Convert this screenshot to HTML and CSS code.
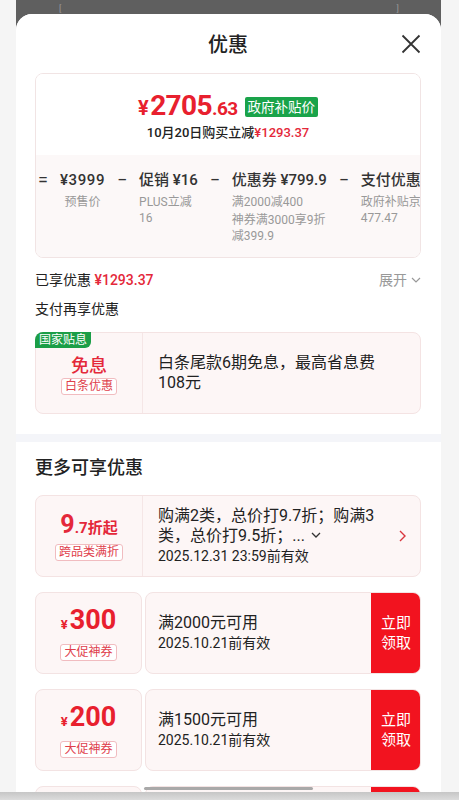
FILE: index.html
```html
<!DOCTYPE html>
<html>
<head>
    <meta charset="utf-8">
    <title>优惠</title>
    <link rel="stylesheet" href="styles.css">
</head>
<body>
    <div class="screen">
        <div class="stage">
            <div class="column">
                <div class="backdrop">
                    <span class="mark">[</span>
                    <span class="mark">]</span>
                </div>
                <div class="sheet">
                    <section class="panel panel-top">
                        <div class="sheet-head">
                            <span></span>
                            <h1>优惠</h1>
                            <span class="close">
                                <svg width="20" height="20" viewBox="0 0 20 20"><path d="M1.5 1.5 L18.5 18.5 M18.5 1.5 L1.5 18.5" stroke="#333" stroke-width="1.8" fill="none"/></svg>
                            </span>
                        </div>

                        <div class="price-card">
                            <div class="price-main">
                                <div class="price-line">
                                    <span class="price"><span class="yen">¥</span>2705<span class="cents">.63</span></span>
                                    <span class="gov-tag">政府补贴价</span>
                                </div>
                                <div class="price-note">10月20日购买立减<span class="red">¥1293.37</span></div>
                            </div>
                            <div class="breakdown">
                                <span class="op">=</span>
                                <div class="term center">
                                    <div class="term-main wide">¥3999</div>
                                    <div class="term-sub">预售价</div>
                                </div>
                                <span class="op">−</span>
                                <div class="term">
                                    <div class="term-main">促销 ¥16</div>
                                    <div class="term-sub">PLUS立减16</div>
                                </div>
                                <span class="op">−</span>
                                <div class="term">
                                    <div class="term-main">优惠券 ¥799.9</div>
                                    <div class="term-sub">满2000减400</div>
                                    <div class="term-sub">神券满3000享9折减399.9</div>
                                </div>
                                <span class="op">−</span>
                                <div class="term">
                                    <div class="term-main">支付优惠</div>
                                    <div class="term-sub">政府补贴京477.47</div>
                                </div>
                            </div>
                        </div>

                        <div class="enjoyed">
                            <span>已享优惠 <b class="red">¥1293.37</b></span>
                            <span class="expand">展开
                                <svg width="10" height="6" viewBox="0 0 10 6"><path d="M1 1 L5 5 L9 1" stroke="#999" stroke-width="1.2" fill="none"/></svg>
                            </span>
                        </div>
                        <div class="pay-title">支付再享优惠</div>

                        <div class="offer">
                            <span class="nation-tag">国家贴息</span>
                            <div class="stub">
                                <div class="stub-big">免息</div>
                                <span class="mini-tag">白条优惠</span>
                            </div>
                            <div class="offer-body">
                                <div class="offer-text">白条尾款6期免息，最高省息费108元</div>
                            </div>
                        </div>
                    </section>

                    <section class="panel panel-more">
                        <h2>更多可享优惠</h2>

                        <div class="offer deal">
                            <div class="stub">
                                <div class="stub-big"><span class="big-nine">9</span>.7折起</div>
                                <span class="mini-tag">跨品类满折</span>
                            </div>
                            <div class="offer-body deal-body">
                                <div class="deal-text">
                                    <div class="deal-rule">购满2类，总价打9.7折；购满3<br>类，总价打9.5折；...
                                        <svg width="10" height="6" viewBox="0 0 10 6"><path d="M1 1 L5 5 L9 1" stroke="#333" stroke-width="1.3" fill="none"/></svg>
                                    </div>
                                    <div class="deal-date">2025.12.31 23:59前有效</div>
                                </div>
                                <svg class="arrow" width="7" height="12" viewBox="0 0 7 12"><path d="M1 1 L6 6 L1 11" stroke="#d9363e" stroke-width="1.4" fill="none"/></svg>
                            </div>
                        </div>

                        <div class="coupon">
                            <div class="coupon-stub">
                                <div class="amount"><span class="amount-yen">¥</span>300</div>
                                <span class="mini-tag">大促神券</span>
                            </div>
                            <div class="coupon-body">
                                <div class="coupon-info">
                                    <div class="coupon-rule">满2000元可用</div>
                                    <div class="coupon-date">2025.10.21前有效</div>
                                </div>
                                <div class="grab">立即<br>领取</div>
                            </div>
                        </div>

                        <div class="coupon">
                            <div class="coupon-stub">
                                <div class="amount"><span class="amount-yen">¥</span>200</div>
                                <span class="mini-tag">大促神券</span>
                            </div>
                            <div class="coupon-body">
                                <div class="coupon-info">
                                    <div class="coupon-rule">满1500元可用</div>
                                    <div class="coupon-date">2025.10.21前有效</div>
                                </div>
                                <div class="grab">立即<br>领取</div>
                            </div>
                        </div>

                        <div class="coupon">
                            <div class="coupon-stub">
                                <div class="amount"><span class="amount-yen">¥</span>100</div>
                                <span class="mini-tag">大促神券</span>
                            </div>
                            <div class="coupon-body">
                                <div class="coupon-info">
                                    <div class="coupon-rule">满1000元可用</div>
                                    <div class="coupon-date">2025.10.21前有效</div>
                                </div>
                                <div class="grab">立即<br>领取</div>
                            </div>
                        </div>
                    </section>
                </div>
            </div>
        </div>
        <div class="nav-strip"></div>
        <div class="home-bar"></div>
    </div>
</body>
</html>
```

FILE: styles.css
```css
* {
    box-sizing: border-box;
}

body {
    margin: 0;
    font-family: Roboto, "Noto Sans CJK SC", sans-serif;
    color: #222;
    background-color: #f5f5f5;
}

.screen {
    position: relative;
    height: 800px;
    display: flex;
    flex-direction: column;
    overflow: hidden;
}

.stage {
    flex: 1;
    min-height: 0;
    display: flex;
    padding: 0 18px 0 16px;
}

.column {
    flex: 1;
    min-width: 0;
    display: flex;
    flex-direction: column;
    background-color: #5f5f5f;
}

.backdrop {
    height: 14px;
    display: flex;
    justify-content: space-between;
    padding: 0 42px 0 43px;
    overflow: hidden;
}

.mark {
    color: #9a9a9a;
    font-size: 9px;
    line-height: 16px;
}

.sheet {
    flex: 1;
    min-height: 0;
    display: flex;
    flex-direction: column;
    gap: 8px;
    background-color: #f4f5f9;
    border-radius: 16px 16px 0 0;
    overflow: hidden;
}

.panel {
    min-width: 0;
    background-color: #fff;
    padding: 0 20px 20px 19px;
}

.panel-more {
    flex: 1;
    min-height: 0;
    padding-top: 13px;
    overflow: hidden;
}

.sheet-head {
    height: 59px;
    display: grid;
    grid-template-columns: 1fr auto 1fr;
    align-items: center;
}

.sheet-head h1 {
    margin: 0;
    font-size: 20px;
    font-weight: 500;
    color: #222;
}

.close {
    justify-self: end;
    display: flex;
}

/* price card */
.price-card {
    border: 1px solid #f1e4e4;
    border-radius: 8px;
    overflow: hidden;
}

.price-main {
    height: 81px;
    padding-top: 17px;
    display: flex;
    flex-direction: column;
    align-items: center;
    background-color: #fff;
}

.price-line {
    display: flex;
    align-items: center;
    height: 32px;
}

.price {
    color: #e8202e;
    font-size: 28px;
    font-weight: 700;
    letter-spacing: -0.6px;
    line-height: 32px;
}

.price .yen {
    font-size: 20px;
    margin-right: 2px;
}

.price .cents {
    font-size: 19px;
}

.gov-tag {
    margin-left: 7px;
    padding: 0 3px;
    height: 20px;
    line-height: 20px;
    font-size: 13.5px;
    color: #fff;
    background-color: #1aa34a;
    border-radius: 2px;
}

.price-note {
    font-size: 13px;
    font-weight: 500;
    line-height: 20px;
    color: #222;
}

.red {
    color: #e4283a;
}

.breakdown {
    position: relative;
    display: flex;
    align-items: flex-start;
    gap: 12px;
    padding: 14px 0 13px 2px;
    background-color: #fcf8f8;
    overflow: hidden;
}

.breakdown::before {
    content: "";
    position: absolute;
    top: -5px;
    left: calc(50% - 6px);
    border-left: 6px solid transparent;
    border-right: 6px solid transparent;
    border-bottom: 5px solid #fcf8f8;
}

.op {
    flex-shrink: 0;
    width: 10px;
    text-align: center;
    font-size: 18px;
    line-height: 22px;
    color: #333;
}

.term {
    flex-shrink: 0;
    width: min-content;
    display: flex;
    flex-direction: column;
}

.term.center {
    text-align: center;
}

.term-main {
    white-space: nowrap;
    font-size: 15px;
    font-weight: 500;
    line-height: 22px;
    color: #333;
}

.term-main.wide {
    letter-spacing: 0.6px;
}

.term-sub {
    margin-top: 2px;
    font-size: 12px;
    line-height: 16px;
    color: #999;
}

.term-main + .term-sub {
    margin-top: 3px;
}

.enjoyed {
    margin-top: 11px;
    display: flex;
    justify-content: space-between;
    align-items: center;
    font-size: 14px;
    line-height: 22px;
}

.enjoyed b {
    font-weight: 500;
}

.expand {
    color: #999;
    display: flex;
    align-items: center;
    gap: 4px;
}

.pay-title {
    margin-top: 7px;
    font-size: 14px;
    line-height: 22px;
}

/* offer cards */
.offer {
    position: relative;
    margin-top: 12px;
    height: 82px;
    display: flex;
    border: 1px solid #f4e3e3;
    border-radius: 8px;
    background-color: #fdf6f6;
}

.nation-tag {
    position: absolute;
    top: -1px;
    left: -1px;
    padding: 0 4px;
    font-size: 12px;
    line-height: 16px;
    color: #fff;
    background-color: #1b9e47;
    border-radius: 8px 0 6px 0;
}

.stub {
    width: 106px;
    flex-shrink: 0;
    display: flex;
    flex-direction: column;
    align-items: center;
    justify-content: center;
    padding-top: 3px;
}

.stub-big {
    font-size: 18px;
    font-weight: 500;
    line-height: 22px;
    color: #e4283a;
}

.mini-tag {
    margin-top: 1px;
    padding: 0 3px;
    font-size: 12px;
    line-height: 15px;
    color: #e0404c;
    background-color: #fff;
    border: 1px solid #f1bcc0;
    border-radius: 3px;
}

.offer-body {
    flex: 1;
    min-width: 0;
    display: flex;
    flex-direction: column;
    justify-content: center;
    padding: 0 24px 0 15px;
    border-left: 1px solid #f5e6e6;
}

.offer-text {
    font-size: 16px;
    line-height: 20px;
}

.panel-more h2 {
    margin: 0;
    font-size: 18px;
    font-weight: 500;
    line-height: 26px;
}

.deal {
    margin-top: 14px;
}

.deal .stub {
    padding-top: 0;
}

.deal .stub-big {
    font-size: 15px;
    font-weight: 700;
    line-height: 26px;
}

.big-nine {
    font-size: 25px;
}

.deal .mini-tag {
    margin-top: 3px;
}

.deal-body {
    flex-direction: row;
    align-items: center;
    padding-right: 14px;
}

.deal-text {
    flex: 1;
}

.deal-rule {
    font-size: 16px;
    line-height: 20px;
}

.deal-rule svg {
    margin-left: 2px;
    vertical-align: 3px;
}

.deal-date {
    font-size: 14px;
    line-height: 20px;
}

/* coupons */
.coupon {
    margin-top: 15px;
    height: 82px;
    display: flex;
    gap: 3px;
    flex-shrink: 0;
}

.coupon-stub {
    width: 107px;
    flex-shrink: 0;
    display: flex;
    flex-direction: column;
    align-items: center;
    justify-content: center;
    background-color: #fdf6f6;
    border: 1px solid #f3e3e3;
    border-radius: 8px;
}

.amount {
    color: #e8202e;
    font-size: 27px;
    font-weight: 700;
    line-height: 30px;
}

.amount-yen {
    font-size: 13px;
    margin-right: 2px;
}

.coupon-stub .mini-tag {
    margin-top: 4px;
}

.coupon-body {
    flex: 1;
    display: flex;
    background-color: #fdf6f6;
    border: 1px solid #f3e3e3;
    border-radius: 8px;
    overflow: hidden;
}

.coupon-info {
    flex: 1;
    display: flex;
    flex-direction: column;
    justify-content: center;
    padding-left: 12px;
}

.coupon-rule {
    font-size: 16px;
    line-height: 20px;
}

.coupon-date {
    font-size: 14px;
    line-height: 20px;
}

.grab {
    width: 50px;
    margin: -1px -1px -1px 0;
    display: flex;
    align-items: center;
    justify-content: center;
    text-align: center;
    font-size: 15px;
    line-height: 20px;
    color: #fff;
    background-color: #f2131f;
}

.nav-strip {
    height: 8px;
    background: linear-gradient(#c6c6c6, #dcdcdc);
}

.home-bar {
    position: absolute;
    left: 144px;
    top: 787px;
    width: 169px;
    height: 3px;
    border-radius: 2px;
    background-color: #a9a9a9;
}
```
